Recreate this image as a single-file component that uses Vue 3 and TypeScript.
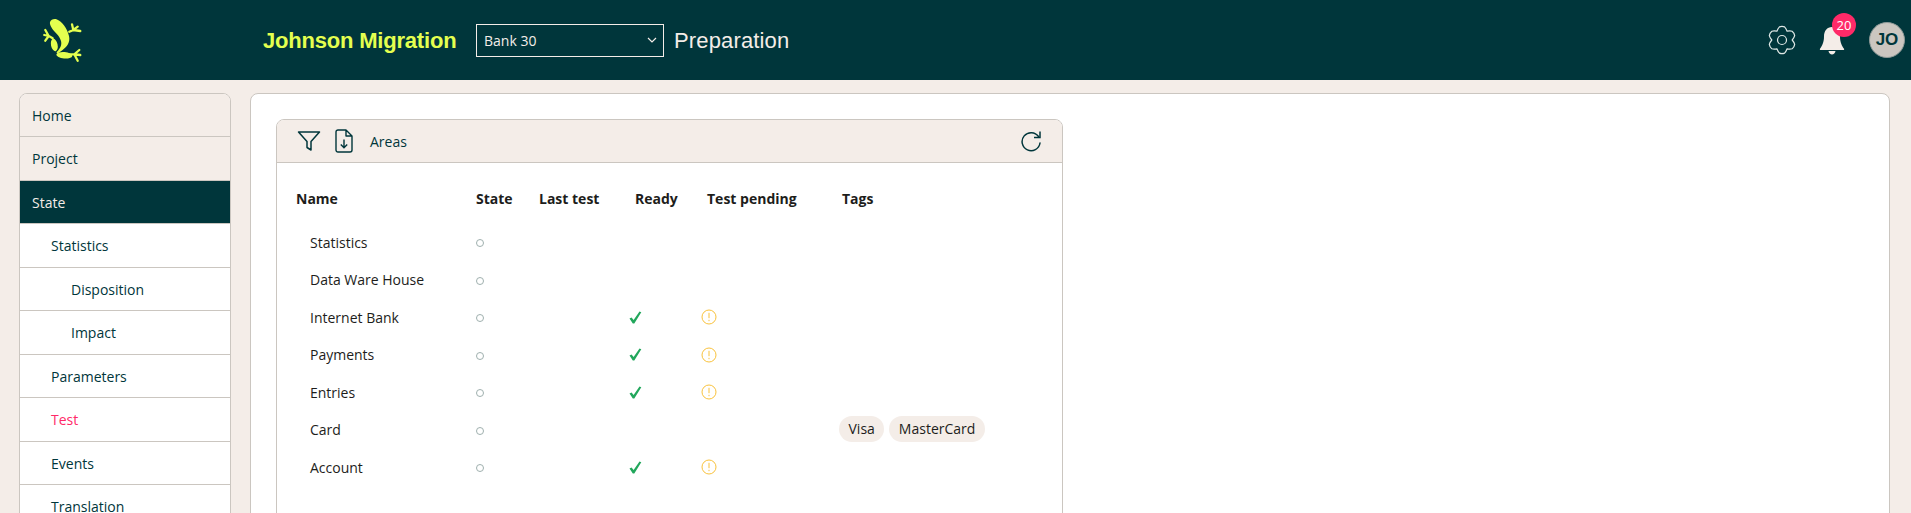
<script setup lang="ts">
interface NavItem {
  label: string;
  level: number;
  active?: boolean;
  current?: boolean;
}

interface Area {
  name: string;
  ready?: boolean;
  pending?: boolean;
  tags?: string[];
}

const navItems: NavItem[] = [
  { label: 'Home', level: 0 },
  { label: 'Project', level: 0 },
  { label: 'State', level: 0, active: true },
  { label: 'Statistics', level: 1 },
  { label: 'Disposition', level: 2 },
  { label: 'Impact', level: 2 },
  { label: 'Parameters', level: 1 },
  { label: 'Test', level: 1, current: true },
  { label: 'Events', level: 1 },
  { label: 'Translation', level: 1 },
];

const areas: Area[] = [
  { name: 'Statistics' },
  { name: 'Data Ware House' },
  { name: 'Internet Bank', ready: true, pending: true },
  { name: 'Payments', ready: true, pending: true },
  { name: 'Entries', ready: true, pending: true },
  { name: 'Card', tags: ['Visa', 'MasterCard'] },
  { name: 'Account', ready: true, pending: true },
];

// Six rounded lobes, centred on 15,15 in a 30 unit box.
function polar(radius: number, degrees: number): string {
  const rad = (degrees * Math.PI) / 180;
  return `${(15 + radius * Math.cos(rad)).toFixed(2)} ${(15 + radius * Math.sin(rad)).toFixed(2)}`;
}

function buildGear(): string {
  let d = `M${polar(10.2, -120)}`;
  for (let i = 0; i < 6; i++) {
    const a = -90 + 60 * i;
    d += `Q${polar(12.4, a - 19)} ${polar(13.4, a - 11)}`;
    d += `Q${polar(14.2, a)} ${polar(13.4, a + 11)}`;
    d += `Q${polar(12.4, a + 19)} ${polar(10.2, a + 30)}`;
  }
  return d + 'Z';
}

const gearPath = buildGear();
</script>

<template>
  <div class="page">
    <header class="topbar">
      <div class="logo">
        <svg width="40" height="48" viewBox="0 0 40 48" aria-hidden="true">
          <g fill="#e4ff4f">
            <path d="M8 6C9 3.500 12 2.500 15 3.500 20 5.500 25 12 27 20c1.500 6-2 11-7 14.500l-4 2.700c-1.200.6-1.800-.4-1-1.400 3.500-3.800 5-6.800 4-10.800-1.500-6-7-9-9.500-13.500C8.300 9.500 7.600 7.600 8 6z" />
            <ellipse cx="12.300" cy="29" rx="3.300" ry="6.300" transform="rotate(-12 12.300 29)" />
            <ellipse cx="22.300" cy="39.200" rx="8" ry="3.200" transform="rotate(5 22.300 39.200)" />
          </g>
          <g fill="none" stroke="#e4ff4f" stroke-width="2.300" stroke-linecap="round">
            <path d="M27.300 15.700L31.300 14 30 8.300M31.300 14l4.400-3.300M31.300 14l7 1" />
            <path d="M10.700 22.300L6.700 20 3.300 14M6.700 20l-4.400-1M6.700 20l-3.400 4.700" />
            <path d="M27.300 38.300h5l5-4.300M32.300 38.300l6 .7M32.300 38.300l3.400 6.400" />
          </g>
        </svg>
      </div>
      <h1 class="project">Johnson Migration</h1>
      <div class="bank-select">
        <span>Bank 30</span>
        <svg width="10" height="7" viewBox="0 0 10 7" aria-hidden="true">
          <path d="M1 1l4 4 4-4" fill="none" stroke="#f4ede8" stroke-width="1.200" />
        </svg>
      </div>
      <div class="phase">Preparation</div>
      <div class="actions">
        <svg class="gear" width="30" height="30" viewBox="0 0 30 30" aria-hidden="true">
          <path :d="gearPath" fill="none" stroke="#dfe8e6" stroke-width="1.200" stroke-linejoin="round" />
          <circle cx="15" cy="15" r="4.500" fill="none" stroke="#dfe8e6" stroke-width="1.200" />
        </svg>
        <div class="bell">
          <svg width="28" height="32" viewBox="0 0 28 32" aria-hidden="true">
            <path
              d="M14 3c-5 0-8 4-8 9.500 0 6-2 9.500-4 12.200-.4.700 0 1.300.7 1.300h22.600c.7 0 1.100-.6.700-1.300-2-2.700-4-6.200-4-12.200C22 7 19 3 14 3z"
              fill="#f4ede8"
            />
            <path d="M10.500 27h7c-.4 2.300-1.800 3.500-3.500 3.500s-3.100-1.200-3.500-3.500z" fill="#f4ede8" />
          </svg>
          <span class="badge">20</span>
        </div>
        <div class="avatar">JO</div>
      </div>
    </header>

    <div class="body">
      <nav class="sidebar">
        <a
          v-for="item in navItems"
          :key="item.label"
          class="nav-item"
          :class="[`level-${item.level}`, { active: item.active, current: item.current }]"
        >{{ item.label }}</a>
      </nav>

      <main class="main">
        <section class="panel">
          <div class="panel-head">
            <svg class="icon" width="24" height="22" viewBox="0 0 24 22" aria-hidden="true">
              <path
                d="M1.500 2h21l-8.500 9.500v8.500l-4-2.500v-6z"
                fill="none"
                stroke="#00363b"
                stroke-width="1.500"
                stroke-linejoin="round"
              />
            </svg>
            <svg class="icon file" width="18" height="24" viewBox="0 0 18 24" aria-hidden="true">
              <path
                d="M3 1h8l6 6v14a2 2 0 0 1-2 2H3a2 2 0 0 1-2-2V3a2 2 0 0 1 2-2zM11 1v6h6"
                fill="none"
                stroke="#00363b"
                stroke-width="1.400"
                stroke-linejoin="round"
              />
              <path
                d="M9 10.500v8M5.800 15.500L9 18.700l3.200-3.200"
                fill="none"
                stroke="#00363b"
                stroke-width="1.400"
              />
            </svg>
            <span class="panel-title">Areas</span>
            <svg class="refresh" width="22" height="22" viewBox="0 0 22 22" aria-hidden="true">
              <path
                d="M18.500 6.500A9 9 0 1 0 20 13"
                fill="none"
                stroke="#00363b"
                stroke-width="1.500"
                stroke-linecap="round"
              />
              <path d="M20 1.500v6h-6" fill="none" stroke="#00363b" stroke-width="1.500" />
            </svg>
          </div>

          <div class="table">
            <div class="row head">
              <div>Name</div>
              <div>State</div>
              <div>Last test</div>
              <div>Ready</div>
              <div>Test pending</div>
              <div>Tags</div>
            </div>
            <div v-for="area in areas" :key="area.name" class="row">
              <div class="name">{{ area.name }}</div>
              <div><span class="dot"></span></div>
              <div></div>
              <div class="ready-cell">
                <svg v-if="area.ready" width="13" height="13" viewBox="0 0 13 13" aria-hidden="true">
                  <path d="M.5 7.500L2.600 6.400 4.600 9 10.500.5l1.800.7L5.300 12.500H3.800z" fill="#22a75c" />
                </svg>
              </div>
              <div class="pending-cell">
                <svg v-if="area.pending" width="16" height="16" viewBox="0 0 16 16" aria-hidden="true">
                  <circle cx="8" cy="8" r="7" fill="none" stroke="#f9c23c" stroke-width="1" />
                  <path d="M8 3.800v5.400M8 10.800v1.400" stroke="#f9c23c" stroke-width="1" />
                </svg>
              </div>
              <div class="tags">
                <span v-for="tag in area.tags" :key="tag" class="tag">{{ tag }}</span>
              </div>
            </div>
          </div>
        </section>
      </main>
    </div>
  </div>
</template>

<style>
html,
body {
  margin: 0;
  height: 100%;
  overflow: hidden;
  background: #f4ede8;
}
</style>

<style scoped>
.page {
  height: 513px;
  overflow: hidden;
  font-family: 'Open Sans', 'Noto Sans', sans-serif;
  background: #f4ede8;
  color: #00363b;
}

.topbar {
  height: 80px;
  display: flex;
  align-items: center;
  background: #00363b;
}
.logo {
  width: 263px;
  padding-left: 42px;
  box-sizing: border-box;
  display: flex;
  align-items: center;
}
.project {
  margin: 1px 0 0;
  width: 213px;
  font-family: 'Liberation Sans', sans-serif;
  font-size: 22px;
  font-weight: 700;
  color: #e4ff4f;
  letter-spacing: -0.2px;
}
.bank-select {
  width: 188px;
  height: 33px;
  box-sizing: border-box;
  border: 1px solid #f4ede8;
  display: flex;
  align-items: center;
  justify-content: space-between;
  padding: 0 6px 0 7px;
  font-size: 14px;
  color: #f4ede8;
}
.phase {
  margin: 1px 0 0 10px;
  font-family: 'Liberation Sans', sans-serif;
  font-size: 22px;
  letter-spacing: 0.15px;
  color: #f4ede8;
}
.actions {
  margin-left: auto;
  display: flex;
  align-items: center;
  padding-right: 6px;
}
.gear {
  margin-right: 21px;
}
.bell {
  position: relative;
  width: 28px;
  height: 32px;
  margin-right: 23px;
}
.badge {
  position: absolute;
  top: -11px;
  left: 14px;
  width: 24px;
  height: 24px;
  border-radius: 50%;
  background: #ff2a68;
  color: #fff;
  font-size: 13px;
  line-height: 24px;
  text-align: center;
}
.avatar {
  width: 36px;
  height: 36px;
  border-radius: 50%;
  background: #cbc6c0;
  border: 1px solid #8f9a98;
  box-sizing: border-box;
  color: #00363b;
  font-family: 'Liberation Sans', sans-serif;
  font-size: 17px;
  font-weight: 700;
  line-height: 34px;
  text-align: center;
}

.body {
  display: flex;
  align-items: flex-start;
  gap: 19px;
  padding: 13px 21px 0 19px;
}
.sidebar {
  flex: 0 0 212px;
  box-sizing: border-box;
  border: 1px solid #cbc6c0;
  border-radius: 8px 8px 0 0;
  overflow: hidden;
  background: #fff;
}
.nav-item {
  display: block;
  box-sizing: border-box;
  height: 43.500px;
  line-height: 43px;
  font-size: 14px;
  border-bottom: 1px solid #cbc6c0;
  padding-left: 12px;
  color: #00363b;
  background: #fff;
}
.nav-item:first-child {
  height: 43px;
}
.level-0 {
  background: #f4ede8;
}
.level-1 {
  padding-left: 31px;
}
.level-2 {
  padding-left: 51px;
}
.nav-item.active {
  background: #00363b;
  color: #f4ede8;
}
.nav-item.current {
  color: #ff2a68;
}

.main {
  flex: 1;
  height: 500px;
  box-sizing: border-box;
  background: #fff;
  border: 1px solid #cbc6c0;
  border-radius: 8px 8px 0 0;
  padding: 25px 25px 0;
}
.panel {
  width: 787px;
  height: 420px;
  box-sizing: border-box;
  border: 1px solid #cbc6c0;
  border-radius: 8px 8px 0 0;
}
.panel-head {
  height: 43px;
  box-sizing: border-box;
  display: flex;
  align-items: center;
  background: #f4ede8;
  border-bottom: 1px solid #cbc6c0;
  border-radius: 7px 7px 0 0;
  padding: 0 20px;
}
.icon {
  flex: none;
}
.file {
  margin-left: 14px;
}
.panel-title {
  margin-left: 17px;
  font-size: 14px;
}
.refresh {
  margin-left: auto;
}

.table {
  padding: 15px 0 0 19px;
  font-size: 14px;
  color: #1d1d1b;
}
.row {
  display: grid;
  grid-template-columns: 180px 63px 96px 72px 135px 1fr;
  align-items: center;
  height: 37.500px;
}
.row.head {
  height: 40px;
  margin-bottom: 5.700px;
  font-weight: 700;
}
.name {
  padding-left: 14px;
}
.dot {
  display: block;
  width: 8px;
  height: 8px;
  margin-top: 2px;
  box-sizing: border-box;
  border: 1px solid #9fb0ae;
  border-radius: 50%;
}
.ready-cell {
  display: flex;
}
.pending-cell {
  display: flex;
}
.ready-cell svg {
  margin-left: -6px;
}
.pending-cell svg {
  margin-left: -6px;
}
.tags {
  display: flex;
  gap: 5px;
  margin: -2px 0 0 -3px;
}
.tag {
  background: #f4ede8;
  border-radius: 13px;
  height: 26px;
  line-height: 26px;
  padding: 0 9.500px;
  color: #1d1d1b;
}
</style>
